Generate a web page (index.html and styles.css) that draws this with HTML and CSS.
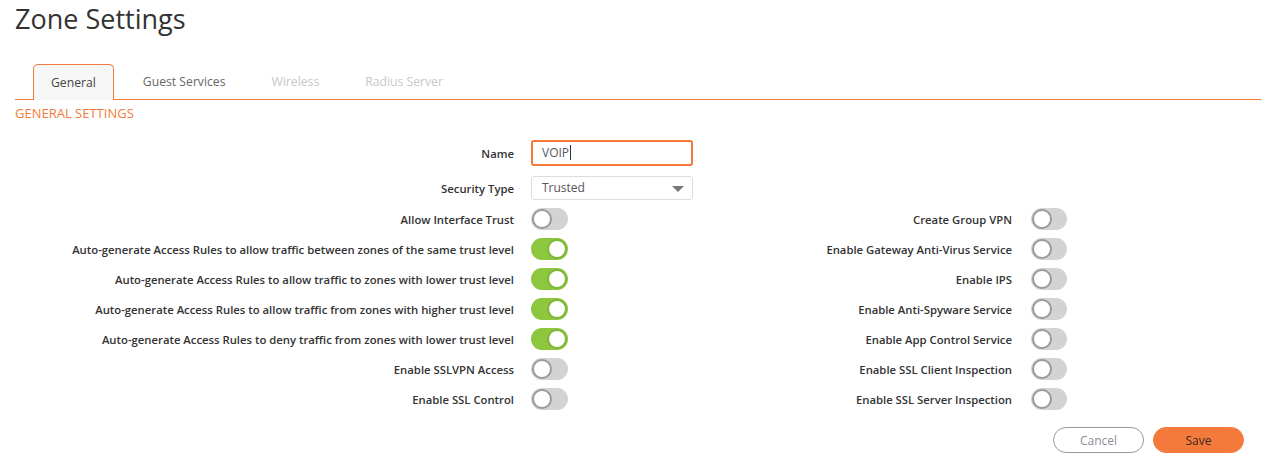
FILE: index.html
```html
<!DOCTYPE html>
<html>
<head>
<meta charset="utf-8">
<link rel="stylesheet" href="styles.css">
</head>
<body>
<div class="page">
  <h1 class="title">Zone Settings</h1>
  <div class="tabs">
    <div class="tab active">General</div>
    <div class="tab">Guest Services</div>
    <div class="tab disabled">Wireless</div>
    <div class="tab disabled">Radius Server</div>
  </div>
  <div class="section">GENERAL SETTINGS</div>
  <div class="form">
    <div class="label row-name">Name</div>
    <div class="ctl row-name"><div class="input focus">VOIP<span class="caret"></span></div></div>
    <div class="label row-sec">Security Type</div>
    <div class="ctl row-sec"><div class="input select">Trusted<span class="arrow"></span></div></div>

    <div class="label">Allow Interface Trust</div>
    <div class="ctl"><span class="tog"></span></div>
    <div class="label r">Create Group VPN</div>
    <div class="ctl"><span class="tog"></span></div>

    <div class="label">Auto-generate Access Rules to allow traffic between zones of the same trust level</div>
    <div class="ctl"><span class="tog on"></span></div>
    <div class="label r">Enable Gateway Anti-Virus Service</div>
    <div class="ctl"><span class="tog"></span></div>

    <div class="label">Auto-generate Access Rules to allow traffic to zones with lower trust level</div>
    <div class="ctl"><span class="tog on"></span></div>
    <div class="label r">Enable IPS</div>
    <div class="ctl"><span class="tog"></span></div>

    <div class="label">Auto-generate Access Rules to allow traffic from zones with higher trust level</div>
    <div class="ctl"><span class="tog on"></span></div>
    <div class="label r">Enable Anti-Spyware Service</div>
    <div class="ctl"><span class="tog"></span></div>

    <div class="label">Auto-generate Access Rules to deny traffic from zones with lower trust level</div>
    <div class="ctl"><span class="tog on"></span></div>
    <div class="label r">Enable App Control Service</div>
    <div class="ctl"><span class="tog"></span></div>

    <div class="label">Enable SSLVPN Access</div>
    <div class="ctl"><span class="tog"></span></div>
    <div class="label r">Enable SSL Client Inspection</div>
    <div class="ctl"><span class="tog"></span></div>

    <div class="label">Enable SSL Control</div>
    <div class="ctl"><span class="tog"></span></div>
    <div class="label r">Enable SSL Server Inspection</div>
    <div class="ctl"><span class="tog"></span></div>
  </div>
  <div class="actions">
    <button class="btn cancel">Cancel</button>
    <button class="btn save">Save</button>
  </div>
</div>
</body>
</html>
```

FILE: styles.css
```css
html, body {
  margin: 0;
  padding: 0;
  background: #fff;
  font-family: "Open Sans", "Liberation Sans", sans-serif;
  color: #333;
}
.page {
  width: 1261px;
  height: 465px;
  overflow: hidden;
}
.title {
  margin: 0;
  padding: 0 0 0 15px;
  font-size: 27px;
  font-weight: 400;
  line-height: 38px;
  color: #333;
}
.tabs {
  margin: 26px 0 0 15px;
  padding-left: 18px;
  display: flex;
  gap: 12px;
  border-bottom: 1px solid #f47a3c;
  height: 35px;
  align-items: flex-end;
}
.tab {
  height: 35px;
  line-height: 35px;
  padding: 0 17px;
  font-size: 12.2px;
  color: #666;
  box-sizing: border-box;
}
.tab.active {
  border: 1px solid #f47a3c;
  border-bottom: none;
  border-radius: 5px 5px 0 0;
  background: #f7f7f7;
  color: #444;
  height: 36px;
  line-height: 35px;
  margin-bottom: -1px;
}
.tab.disabled { color: #c8c8c8; }
.section {
  margin: 5px 0 0 15px;
  font-size: 13px;
  font-weight: 500;
  color: #f47a3c;
  line-height: 16px;
}
.form {
  margin: 19px 0 0 15px;
  display: grid;
  grid-template-columns: 516px 162px 338px 36px;
  grid-template-rows: 26px 24px;
  grid-auto-rows: 22px;
  row-gap: 8px;
  align-items: center;
}
.label {
  grid-column: 1;
  text-align: right;
  padding-right: 17px;
  font-size: 11.3px;
  font-weight: 600;
  color: #333;
  white-space: nowrap;
}
.label.r { grid-column: 3; padding-right: 19px; }
.ctl { display: flex; align-items: center; }
.row-name { grid-row: 1; }
.row-sec { grid-row: 2; margin-top: 2px; margin-bottom: -2px; }
.form .row-name.ctl, .form .row-sec.ctl { grid-column: 2 / span 2; }
.input {
  box-sizing: border-box;
  width: 162px;
  height: 26px;
  border: 1px solid #ddd;
  border-radius: 3px;
  padding-left: 10px;
  font-size: 12px;
  line-height: 24px;
  color: #555;
  position: relative;
  background: #fff;
}
.input.focus {
  border: 2px solid #f47a3c;
  line-height: 22px;
  padding-left: 9px;
}
.caret {
  display: inline-block;
  width: 1px;
  height: 15px;
  background: #333;
  vertical-align: middle;
  margin-left: 1px;
  margin-top: -2px;
}
.input.select { height: 24px; line-height: 22px; }
.arrow {
  position: absolute;
  right: 8px;
  top: 9px;
  width: 0;
  height: 0;
  border-left: 6px solid transparent;
  border-right: 6px solid transparent;
  border-top: 6px solid #777;
}
.tog {
  display: inline-block;
  width: 37px;
  height: 22px;
  border-radius: 11px;
  background: #d3d3d3;
  position: relative;
  top: 2px;
}
.form > .label:not(.row-name):not(.row-sec) { position: relative; top: 2px; }
.tog::after {
  content: "";
  position: absolute;
  left: 1px;
  top: 1px;
  width: 16px;
  height: 16px;
  border-radius: 50%;
  background: #fff;
  border: 2px solid #9a9a9a;
}
.tog.on { background: #8dc63f; }
.tog.on::after { left: auto; right: 1px; border-color: #7fb534; }
.actions {
  display: flex;
  justify-content: flex-end;
  gap: 9px;
  padding-right: 17px;
  margin-top: 19px;
}
.btn {
  width: 91px;
  height: 26px;
  border-radius: 13px;
  font-family: "Open Sans", "Liberation Sans", sans-serif;
  font-size: 12px;
  padding: 0;
  cursor: pointer;
}
.cancel {
  background: #fff;
  border: 1px solid #999;
  color: #8a8f99;
}
.save {
  background: #f47a3c;
  border: 1px solid #f47a3c;
  color: #3a2a20;
}
```
